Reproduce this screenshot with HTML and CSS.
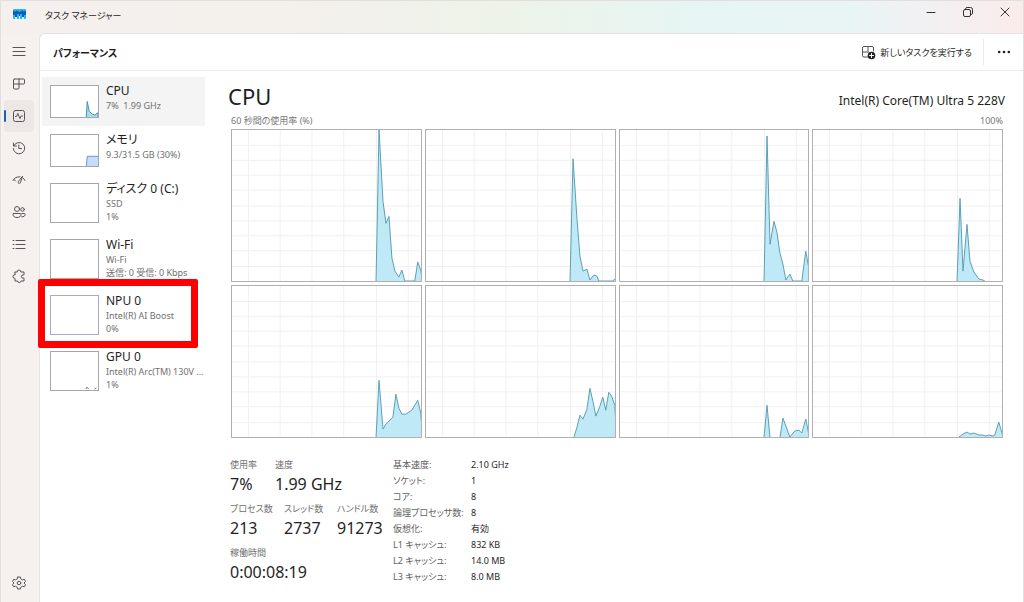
FILE: index.html
```html
<!DOCTYPE html>
<html lang="ja">
<head>
    <meta charset="UTF-8">
    <meta name="viewport" content="width=device-width, initial-scale=1.0">
    <title>タスク マネージャー</title>
    <link rel="stylesheet" href="styles.css">
</head>
<body>
    <!-- shared grid lines for the charts -->
    <svg class="defs" aria-hidden="true">
        <symbol id="grid" viewBox="0 0 190 152" preserveAspectRatio="none">
            <path class="grid-line" d="M16.5 0V152M48.5 0V152M80.5 0V152M112.5 0V152M145.5 0V152M177.5 0V152M0 15.5H190M0 30.5H190M0 45.5H190M0 60.5H190M0 76.5H190M0 91.5H190M0 106.5H190M0 121.5H190M0 137.5H190"/>
        </symbol>
    </svg>

    <div class="window">
        <header class="titlebar">
            <svg class="app-icon" viewBox="0 0 13 10">
                <rect width="13" height="10" rx="1" fill="#2bb3f3"/>
                <path d="M0 1.500V6H2V8H4V5H6V7H7V5H9V8H11V6H13V1.500L11 2.500L9 1.500L6.500 3L4 1.500L2 2.500Z" fill="#0c5fae"/>
                <path d="M2 8H4V10H2ZM6 7H7V10H6ZM9 8H11V10H9Z" fill="#c9effc"/>
            </svg>
            <span class="app-name">タスク マネージャー</span>
            <div class="window-buttons">
                <button type="button" aria-label="最小化">
                    <svg class="icon" viewBox="0 0 16 16"><path d="M4 8.500H12"/></svg>
                </button>
                <button type="button" aria-label="元に戻す">
                    <svg class="icon" viewBox="0 0 16 16"><rect x="3.500" y="5.500" width="7" height="7" rx="1.500"/><path d="M5.500 4.500q.3-1 1.500-1h3.500a2 2 0 0 1 2 2V9q0 1.200-1 1.500"/></svg>
                </button>
                <button type="button" aria-label="閉じる">
                    <svg class="icon" viewBox="0 0 16 16"><path d="M4 4L12 12M12 4L4 12"/></svg>
                </button>
            </div>
        </header>

        <div class="body">
            <nav class="rail">
                <button type="button" class="rail-button menu" aria-label="メニュー">
                    <svg class="icon" viewBox="0 0 16 16"><path d="M2 4.500H14M2 8.500H14M2 12.500H14"/></svg>
                </button>
                <button type="button" class="rail-button" aria-label="プロセス">
                    <svg class="icon" viewBox="0 0 16 16"><path d="M3.500 3H12.500a1 1 0 0 1 1 1V7a1 1 0 0 1-1 1H2.500V4a1 1 0 0 1 1-1M2.500 8V12a1 1 0 0 0 1 1H7a1 1 0 0 0 1-1V3"/></svg>
                </button>
                <button type="button" class="rail-button active" aria-label="パフォーマンス">
                    <svg class="icon" viewBox="0 0 16 16"><rect x="2.500" y="2.500" width="11" height="11" rx="2"/><path d="M4.500 8.500H5.500L6.800 5.500L9 10.500L10.200 8H11.500"/></svg>
                </button>
                <button type="button" class="rail-button" aria-label="アプリの履歴">
                    <svg class="icon" viewBox="0 0 16 16"><path d="M2.500 3V6H5.500M2.800 5.800A5.700 5.700 0 1 1 2.300 8.500M7.800 5V8.500H10.500"/></svg>
                </button>
                <button type="button" class="rail-button" aria-label="スタートアップ アプリ">
                    <svg class="icon" viewBox="0 0 16 16"><path d="M2 8.500Q4 4.500 9 4.800M12 6Q13.300 7 14 8.500M4.500 9L3 7.500M11.500 4.500L9.300 11a1.200 1.200 0 0 1-2.200-.8Z"/></svg>
                </button>
                <button type="button" class="rail-button" aria-label="ユーザー">
                    <svg class="icon" viewBox="0 0 16 16"><circle cx="6" cy="5" r="2.500"/><circle cx="11.500" cy="5.500" r="1.800"/><path d="M2.500 9.500H9.200a.8.8 0 0 1 .8.800C10 12.500 8.300 13.500 6 13.500S2 12.500 2 10.300a.8.800 0 0 1 .5-.8ZM11 9.500H13a1 1 0 0 1 1 1C14 12 13 13 10.800 12.800"/></svg>
                </button>
                <button type="button" class="rail-button" aria-label="詳細">
                    <svg class="icon" viewBox="0 0 16 16"><path d="M2 4.500H3M5 4.500H14M2 8.500H3M5 8.500H14M2 12.500H3M5 12.500H14"/></svg>
                </button>
                <button type="button" class="rail-button" aria-label="サービス">
                    <svg class="icon" viewBox="0 0 16 16"><path d="M4 4H6.200Q6 2 8 2T9.800 4H13V6.800Q10.300 6.600 10.300 8.500T13 10.200V13H10Q9.800 14.500 8.200 14.500T6.500 13H4V10.500Q2 10.500 2 8.500T4 6.500Z"/></svg>
                </button>
                <button type="button" class="rail-button settings" aria-label="設定">
                    <svg class="icon" viewBox="0 0 16 16"><path d="M6.700 2H9.300L9.800 3.900L11.600 4.900L13.400 4.300L14.500 6.500L13 8L14.500 9.700L13.400 11.800L11.600 11.200L9.800 12.200L9.300 14H6.700L6.200 12.200L4.400 11.200L2.600 11.800L1.500 9.700L3 8L1.500 6.500L2.600 4.300L4.400 4.900L6.200 3.900Z"/><circle cx="8" cy="8" r="1.800"/></svg>
                </button>
            </nav>

            <main class="panel">
                <div class="toolbar">
                    <h1 class="page-title">パフォーマンス</h1>
                    <button type="button" class="run-task">
                        <svg class="icon" viewBox="0 0 16 16"><path d="M8 13H4a1.500 1.500 0 0 1-1.500-1.500V4A1.500 1.500 0 0 1 4 2.500H12A1.500 1.500 0 0 1 13.500 4V7M2.500 8H8M8 2.500V8"/><circle cx="11.500" cy="11.500" r="3.800" fill="#222" stroke="none"/><path class="plus" d="M11.500 9.500V13.500M9.500 11.500H13.500"/></svg>
                        新しいタスクを実行する
                    </button>
                    <button type="button" class="more" aria-label="その他">
                        <svg viewBox="0 0 16 16"><circle cx="2.500" cy="8" r="1.500"/><circle cx="8" cy="8" r="1.500"/><circle cx="13.500" cy="8" r="1.500"/></svg>
                    </button>
                </div>

                <div class="content">
                    <div class="devices">
                        <button type="button" class="device selected">
                            <svg class="thumb" viewBox="0 0 48 32" preserveAspectRatio="none"><polygon class="cpu" points="36,32 37,16 39,26 42,29 45,30 47,28 48,28 48,33 36,33"/></svg>
                            <span class="device-text">
                                <span class="device-name">CPU</span>
                                <span>7%&nbsp; 1.99 GHz</span>
                            </span>
                        </button>
                        <button type="button" class="device">
                            <svg class="thumb" viewBox="0 0 48 32" preserveAspectRatio="none"><polygon class="memory" points="36,33 37,22 49,22 49,33"/></svg>
                            <span class="device-text">
                                <span class="device-name">メモリ</span>
                                <span>9.3/31.5 GB (30%)</span>
                            </span>
                        </button>
                        <button type="button" class="device">
                            <svg class="thumb tall" viewBox="0 0 48 40"></svg>
                            <span class="device-text">
                                <span class="device-name">ディスク 0 (C:)</span>
                                <span>SSD</span>
                                <span>1%</span>
                            </span>
                        </button>
                        <button type="button" class="device">
                            <svg class="thumb tall" viewBox="0 0 48 40"></svg>
                            <span class="device-text">
                                <span class="device-name">Wi-Fi</span>
                                <span>Wi-Fi</span>
                                <span>送信: 0 受信: 0 Kbps</span>
                            </span>
                        </button>
                        <button type="button" class="device marked">
                            <svg class="thumb tall npu" viewBox="0 0 48 40"></svg>
                            <span class="device-text">
                                <span class="device-name">NPU 0</span>
                                <span>Intel(R) AI Boost</span>
                                <span>0%</span>
                            </span>
                        </button>
                        <button type="button" class="device">
                            <svg class="thumb tall" viewBox="0 0 48 40"><path class="gpu" d="M36 39L37 37L39 39M45 39L47 38"/></svg>
                            <span class="device-text">
                                <span class="device-name">GPU 0</span>
                                <span>Intel(R) Arc(TM) 130V ...</span>
                                <span>1%</span>
                            </span>
                        </button>
                    </div>

                    <section class="details">
                        <div class="details-head">
                            <h2>CPU</h2>
                            <span class="model">Intel(R) Core(TM) Ultra 5 228V</span>
                        </div>
                        <div class="scale">
                            <span>60 秒間の使用率 (%)</span>
                            <span>100%</span>
                        </div>

                        <div class="charts">
                            <svg class="chart" viewBox="0 0 190 152" preserveAspectRatio="none">
                                <use href="#grid"/>
                                <polygon points="145,152 148,0 152,72 155,94 158,87 161,129 164,142 168,148 171,141 174,152 184,152 187,133 190,141 192,154 145,154"/>
                            </svg>
                            <svg class="chart" viewBox="0 0 190 152" preserveAspectRatio="none">
                                <use href="#grid"/>
                                <polygon points="145,152 148,29 152,90 155,127 158,142 162,140 165,151 168,147 170,146 172,147 174,152 188,152 190,150 192,154 145,154"/>
                            </svg>
                            <svg class="chart" viewBox="0 0 190 152" preserveAspectRatio="none">
                                <use href="#grid"/>
                                <polygon points="145,152 148,6 151,115 155,92 158,103 161,124 164,135 167,151 171,145 174,152 183,152 187,122 190,139 192,154 145,154"/>
                            </svg>
                            <svg class="chart" viewBox="0 0 190 152" preserveAspectRatio="none">
                                <use href="#grid"/>
                                <polygon points="145,152 148,69 151,142 155,95 158,132 162,143 167,150 171,151 173,152 173,154 145,154"/>
                            </svg>
                            <svg class="chart" viewBox="0 0 190 152" preserveAspectRatio="none">
                                <use href="#grid"/>
                                <polygon points="145,152 148,95 152,144 155,139 162,132 165,109 168,123 171,129 175,129 181,125 187,115 190,128 192,154 145,154"/>
                            </svg>
                            <svg class="chart" viewBox="0 0 190 152" preserveAspectRatio="none">
                                <use href="#grid"/>
                                <polygon points="149,152 152,142 155,130 158,134 162,124 165,103 168,116 171,131 175,121 178,112 181,125 184,107 187,111 190,120 192,154 149,154"/>
                            </svg>
                            <svg class="chart" viewBox="0 0 190 152" preserveAspectRatio="none">
                                <use href="#grid"/>
                                <polygon points="145,152 148,120 151,153 161,153 164,133 167,141 171,152 176,146 180,145 183,148 187,134 190,149 192,154 145,154"/>
                            </svg>
                            <svg class="chart" viewBox="0 0 190 152" preserveAspectRatio="none">
                                <use href="#grid"/>
                                <polygon points="147,152 151,149 155,147 158,149 162,148 167,150 171,150 174,151 177,150 181,151 183,150 187,137 190,147 192,154 147,154"/>
                            </svg>
                        </div>

                        <div class="stats">
                            <div class="counters">
                                <dl class="counter-row usage">
                                    <div><dt>使用率</dt><dd>7%</dd></div>
                                    <div><dt>速度</dt><dd>1.99 GHz</dd></div>
                                </dl>
                                <dl class="counter-row">
                                    <div><dt>プロセス数</dt><dd>213</dd></div>
                                    <div><dt>スレッド数</dt><dd>2737</dd></div>
                                    <div><dt>ハンドル数</dt><dd>91273</dd></div>
                                </dl>
                                <dl class="counter-row">
                                    <div><dt>稼働時間</dt><dd>0:00:08:19</dd></div>
                                </dl>
                            </div>
                            <table class="specs">
                                <tr><th scope="row">基本速度:</th><td>2.10 GHz</td></tr>
                                <tr><th scope="row">ソケット:</th><td>1</td></tr>
                                <tr><th scope="row">コア:</th><td>8</td></tr>
                                <tr><th scope="row">論理プロセッサ数:</th><td>8</td></tr>
                                <tr><th scope="row">仮想化:</th><td>有効</td></tr>
                                <tr><th scope="row">L1 キャッシュ:</th><td>832 KB</td></tr>
                                <tr><th scope="row">L2 キャッシュ:</th><td>14.0 MB</td></tr>
                                <tr><th scope="row">L3 キャッシュ:</th><td>8.0 MB</td></tr>
                            </table>
                        </div>
                    </section>
                </div>
            </main>
        </div>
    </div>
</body>
</html>
```
FILE: styles.css
```css
* {
    margin: 0;
    padding: 0;
    box-sizing: border-box;
}

body {
    font-family: 'Noto Sans', 'Noto Sans CJK JP', sans-serif;
    font-feature-settings: 'palt';
    font-size: 9px;
    color: #1f1f1f;
}

button {
    border: none;
    background: none;
    font: inherit;
    font-feature-settings: inherit;
    color: inherit;
    text-align: left;
}

.defs {
    position: absolute;
    width: 0;
    height: 0;
}

.icon {
    width: 16px;
    height: 16px;
    fill: none;
    stroke: #555;
    stroke-width: 1;
    stroke-linecap: round;
    stroke-linejoin: round;
}

.window {
    display: flex;
    flex-direction: column;
    min-height: 100vh;
    background: linear-gradient(90deg, #f5f0ed 0%, #f4f0ec 28%, #edf3e9 50%, #e6f5f3 68%, #e9f5f5 83%, #f3eff1 92%, #faecea 100%) top / 100% 33px no-repeat #f6f0ee;
    border: 1px solid #e3dfdd;
}

/* title bar */
.titlebar {
    display: flex;
    align-items: center;
    height: 32px;
    padding-left: 12px;
}

.app-icon {
    width: 13px;
    height: 10px;
    margin-bottom: 6px;
}

.app-name {
    margin-left: 19px;
    padding-bottom: 3px;
    font-size: 9px;
}

.window-buttons {
    display: flex;
    margin-left: auto;
    padding-bottom: 11px;
}

.window-buttons button {
    display: flex;
    justify-content: center;
    width: 37px;
}

.window-buttons .icon {
    stroke: #333;
}

.body {
    display: flex;
    flex: 1;
}

/* left rail */
.rail {
    display: flex;
    flex-direction: column;
    width: 38px;
    padding: 2px 5px 3px 3px;
}

.rail-button {
    display: flex;
    align-items: center;
    justify-content: center;
    height: 32px;
    border-radius: 4px;
}

.rail-button.menu {
    margin-bottom: 1px;
}

.rail-button.active {
    position: relative;
    background: #ede8e6;
}

.rail-button.active::before {
    content: '';
    position: absolute;
    left: 0;
    top: 10px;
    width: 2px;
    height: 12px;
    border-radius: 1px;
    background: #1464b8;
}

.rail-button.settings {
    margin-top: auto;
}

/* main panel */
.panel {
    display: flex;
    flex-direction: column;
    flex: 1;
    min-width: 0;
    background: #fff;
    border: 1px solid #e6e3e2;
    border-right: none;
    border-bottom: none;
    border-radius: 6px 0 0 0;
}

.toolbar {
    display: flex;
    align-items: center;
    height: 37px;
    padding-left: 13px;
    border-bottom: 1px solid #ebebeb;
}

.page-title {
    font-size: 10px;
    font-weight: 600;
}

.run-task {
    display: flex;
    align-items: center;
    gap: 4px;
    margin-left: auto;
    font-size: 9px;
}

.more {
    display: flex;
    align-items: center;
    justify-content: center;
    width: 40px;
    height: 26px;
    margin-left: 11px;
    border-left: 1px solid #ebebeb;
}

.more svg {
    width: 14px;
    height: 14px;
    fill: #222;
}

.run-task .plus {
    stroke: #fff;
}

.content {
    display: flex;
    flex: 1;
    padding: 6px 20px 0 2px;
}

/* device list */
.devices {
    width: 163px;
}

.device {
    display: flex;
    gap: 7px;
    width: 100%;
    padding: 8px 0 8px 8px;
}

.device.selected {
    background: #f4f4f4;
}

.thumb {
    flex: none;
    width: 49px;
    height: 33px;
    background: #fff;
    border: 1px solid #a3a8ab;
}

.thumb.tall {
    height: 40px;
}

.thumb.npu {
    border-color: #a9abc4;
}

.thumb .cpu {
    fill: #a9dcef;
    stroke: #3f93ad;
}

.thumb .memory {
    fill: #c5dcfa;
    stroke: #6c93cb;
}

.thumb .gpu {
    fill: none;
    stroke: #9457a8;
}

.device-text {
    display: flex;
    flex-direction: column;
    height: 33px;
    margin-top: -2px;
    color: #707070;
    line-height: 13px;
    white-space: nowrap;
}

.device-name {
    color: #1f1f1f;
    font-size: 12px;
    line-height: 16px;
}

/* red frame around one device */
.device.marked {
    position: relative;
}

.device.marked::after {
    content: '';
    position: absolute;
    inset: -8px 7px -5px -4px;
    border: 7px solid #fe0000;
    border-radius: 2px;
}

/* details */
.details {
    display: flex;
    flex-direction: column;
    flex: 1;
    min-width: 0;
    padding: 2px 0 17px 26px;
}

.details-head {
    display: flex;
    align-items: center;
    justify-content: space-between;
    margin-right: -2px;
    margin-left: -3px;
    height: 34px;
}

.details-head h2 {
    font-size: 22px;
    font-weight: 400;
}

.model {
    padding-top: 8px;
    font-size: 12px;
}

.scale {
    display: flex;
    justify-content: space-between;
    color: #777;
    line-height: 16px;
}

.charts {
    display: grid;
    grid-template-columns: repeat(4, 1fr);
    grid-template-rows: 1fr 1fr;
    gap: 3px;
    flex: 1;
}

.chart {
    width: 100%;
    height: 100%;
    border: 1px solid #b0b0b0;
}

.chart polygon {
    fill: #c0e9f8;
    stroke: #5a9fb3;
    stroke-width: 1;
}

.grid-line {
    fill: none;
    stroke: #f0f0f0;
}

/* counters and specs */
.stats {
    display: flex;
    gap: 10px;
    margin-top: 19px;
}

.counters {
    display: flex;
    flex-direction: column;
    gap: 6px;
    width: 152px;
}

.counter-row {
    display: grid;
    grid-template-columns: 54px 53px auto;
    margin-left: -1px;
    white-space: nowrap;
}

.counter-row.usage {
    grid-template-columns: 45px auto;
}

dt {
    color: #707070;
    line-height: 16px;
}

dd {
    font-size: 16px;
    line-height: 22px;
}

.specs {
    border-collapse: collapse;
    line-height: 16px;
    white-space: nowrap;
}

.specs th {
    width: 78px;
    color: #606060;
    font-weight: 400;
    text-align: left;
}
```
